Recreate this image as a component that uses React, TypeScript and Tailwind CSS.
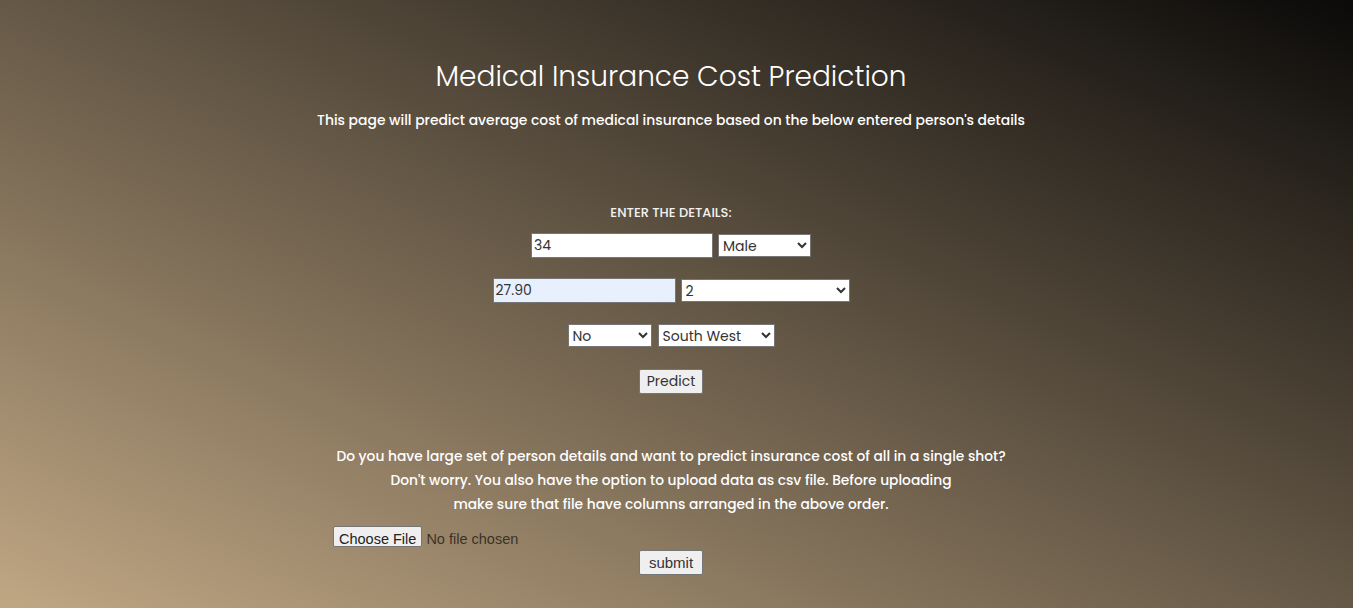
import React from "react";

export default function App() {
  return (
    <div className="min-h-screen bg-[linear-gradient(to_top_right,#c0a784,#0b0a09)] font-['Poppins','Open_Sans',sans-serif] text-white">
      <div className="pr-[11px] pt-[58px] text-center">
        <h1 className="text-[28px] font-light leading-[38px]">Medical Insurance Cost Prediction</h1>
        <p className="mt-[14px] text-[13.9px] font-medium leading-[20px]">
          This page will predict average cost of medical insurance based on the below entered person's details
        </p>

        {/* Single prediction form */}
        <form className="mt-[73px] flex flex-col items-center">
          <span className="text-[13px] font-medium leading-[20px] text-[#f2f2f2]">ENTER THE DETAILS:</span>
          <div className="mt-[10px] flex items-center gap-[5px]">
            <input defaultValue="34" className="h-[25px] w-[182px] border border-[#767676] bg-white px-[2px] text-[14px] text-[#333]" />
            <select defaultValue="Male" className="h-[23px] w-[93px] border border-[#767676] bg-white text-[14px] text-[#333]">
              <option>Male</option>
              <option>Female</option>
            </select>
          </div>
          <div className="mt-[20px] flex items-center gap-[5px]">
            <input defaultValue="27.90" className="h-[25px] w-[183px] border border-[#767676] bg-[#e8f0fe] px-[2px] text-[14px] text-[#333]" />
            <select defaultValue="2" className="h-[23px] w-[169px] border border-[#767676] bg-white text-[14px] text-[#333]">
              <option>0</option>
              <option>1</option>
              <option>2</option>
              <option>3</option>
            </select>
          </div>
          <div className="mt-[21px] flex items-center gap-[6px]">
            <select defaultValue="No" className="h-[23px] w-[84px] border border-[#767676] bg-white text-[14px] text-[#333]">
              <option>No</option>
              <option>Yes</option>
            </select>
            <select defaultValue="South West" className="h-[23px] w-[117px] border border-[#767676] bg-white text-[14px] text-[#333]">
              <option>South West</option>
              <option>South East</option>
              <option>North West</option>
              <option>North East</option>
            </select>
          </div>
          <button type="button" className="mt-[22px] h-[25px] w-[64px] rounded-[2px] border border-[#767676] bg-[#efefef] text-[14px] text-[#333]">
            Predict
          </button>
        </form>

        {/* Bulk upload */}
        <div className="mx-auto mt-[51px] w-[676px] whitespace-nowrap text-[13.8px] font-medium leading-[24px]">
          <p>Do you have large set of person details and want to predict insurance cost of all in a single shot?</p>
          <p>Don't worry. You also have the option to upload data as csv file. Before uploading</p>
          <p>make sure that file have columns arranged in the above order.</p>
          <form className="mt-[9px] flex flex-col items-center">
            <input
              type="file"
              className="self-start font-['Liberation_Sans',sans-serif] text-[14.5px] font-normal text-[#3a3328] file:mr-[4px] file:h-[21px] file:rounded-[2px] file:border file:border-[#767676] file:bg-[#efefef] file:px-[5px] file:text-[#222]"
            />
            <button type="button" className="-mt-[1px] h-[25px] w-[64px] rounded-[2px] border border-[#767676] bg-[#efefef] font-['Liberation_Sans',sans-serif] text-[15px] font-normal text-[#333]">
              submit
            </button>
          </form>
        </div>
      </div>
    </div>
  );
}
